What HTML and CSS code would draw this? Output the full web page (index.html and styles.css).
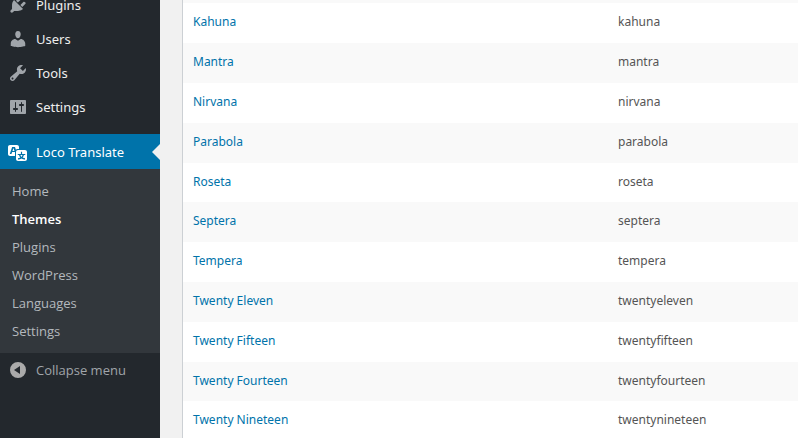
FILE: index.html
```html
<!DOCTYPE html>
<html lang="en">
<head>
    <meta charset="UTF-8">
    <title>Loco Translate - Themes</title>
    <link rel="stylesheet" href="styles.css">
</head>
<body>
    <nav class="sidebar">
        <ul class="menu">
            <li>
                <a class="menu-item" href="#">
                    <svg class="icon" viewBox="0 0 20 20"><path d="M13.11 4.36L9.87 7.6 8 5.73l3.24-3.24c.35-.34 1.05-.2 1.56.32.52.51.66 1.21.31 1.55zm-8 1.77l.91-1.12 9.01 9.01-1.19.84c-.71.71-2.63 1.16-3.82 1.16H6.14L4.9 17.26c-.59.59-1.54.59-2.12 0-.59-.58-.59-1.53 0-2.12l1.24-1.24v-3.88c0-1.13.4-3.19 1.09-3.89zm7.26 3.97l3.24-3.24c.34-.35 1.04-.21 1.55.31.52.51.66 1.21.31 1.55l-3.24 3.25z"/></svg>
                    Plugins
                </a>
            </li>
            <li>
                <a class="menu-item" href="#">
                    <svg class="icon" viewBox="0 0 20 20"><path d="M10 9.25c-2.27 0-2.73-3.44-2.73-3.44C7 4.02 7.82 2 9.97 2c2.16 0 2.98 2.02 2.71 3.81 0 0-.41 3.44-2.68 3.44zm0 2.57L12.72 10c2.39 0 4.52 2.33 4.52 4.53v2.49s-3.65 1.13-7.24 1.13c-3.65 0-7.24-1.13-7.24-1.13v-2.49c0-2.25 1.94-4.48 4.47-4.48z"/></svg>
                    Users
                </a>
            </li>
            <li>
                <a class="menu-item" href="#">
                    <svg class="icon" viewBox="0 0 20 20"><path d="M16.68 9.77c-1.34 1.34-3.3 1.67-4.95.99l-5.41 6.52c-.99.99-2.59.99-3.58 0s-.99-2.59 0-3.57l6.52-5.42c-.68-1.65-.35-3.61.99-4.95 1.28-1.28 3.12-1.62 4.72-1.06l-2.89 2.89 2.82 2.82 2.86-2.87c.53 1.58.18 3.39-1.08 4.65zM3.81 16.21c.4.39 1.04.39 1.43 0 .4-.4.4-1.04 0-1.43-.39-.4-1.03-.4-1.43 0-.39.39-.39 1.03 0 1.43z"/></svg>
                    Tools
                </a>
            </li>
            <li>
                <a class="menu-item" href="#">
                    <svg class="icon" viewBox="0 0 20 20"><path d="M18 16V4c0-.55-.45-1-1-1H3c-.55 0-1 .45-1 1v12c0 .55.45 1 1 1h14c.55 0 1-.45 1-1zM8 11h1c.55 0 1 .45 1 1s-.45 1-1 1H8v1.5c0 .28-.22.5-.5.5s-.5-.22-.5-.5V13H6c-.55 0-1-.45-1-1s.45-1 1-1h1V5.5c0-.28.22-.5.5-.5s.5.22.5.5V11zm5-2h-1c-.55 0-1-.45-1-1s.45-1 1-1h1V5.5c0-.28.22-.5.5-.5s.5.22.5.5V7h1c.55 0 1 .45 1 1s-.45 1-1 1h-1v5.5c0 .28-.22.5-.5.5s-.5-.22-.5-.5V9z"/></svg>
                    Settings
                </a>
            </li>
            <li class="separator"></li>
            <li>
                <a class="menu-item current" href="#">
                    <svg class="icon" viewBox="0 0 20 20"><path d="M11 7H9.49c-.63 0-1.25.3-1.59.7L7 5H4.13l-2.39 7h1.69l.74-2H7v4H2c-1.1 0-2-.9-2-2V5c0-1.1.9-2 2-2h7c1.1 0 2 .9 2 2v2zM6.51 9H4.49l1-2.93zM10 8h7c1.1 0 2 .9 2 2v7c0 1.1-.9 2-2 2h-7c-1.1 0-2-.9-2-2v-7c0-1.1.9-2 2-2zm7.25 5v-1.08h-3.17V9.75h-1.16v2.17H9.75V13h1.28c.11.85.56 1.85 1.28 2.62-.87.36-1.89.62-2.31.62-.01.02.22.97.2 1.46.84 0 2.21-.5 3.28-1.15 1.09.65 2.48 1.15 3.34 1.15-.02-.49.2-1.44.2-1.46-.43 0-1.49-.27-2.38-.63.7-.77 1.14-1.77 1.25-2.61h1.36zm-3.81 1.93c-.5-.46-.85-1.13-1.01-1.93h2.09c-.17.8-.51 1.47-1 1.93l-.04.03s-.03-.02-.04-.03z"/></svg>
                    Loco Translate
                </a>
                <ul class="submenu">
                    <li><a href="#">Home</a></li>
                    <li><a class="active" href="#">Themes</a></li>
                    <li><a href="#">Plugins</a></li>
                    <li><a href="#">WordPress</a></li>
                    <li><a href="#">Languages</a></li>
                    <li><a href="#">Settings</a></li>
                </ul>
            </li>
        </ul>
        <button type="button" class="collapse">
            <svg class="icon" viewBox="0 0 20 20"><path fill-rule="evenodd" d="M10 2a8 8 0 1 0 0 16 8 8 0 0 0 0-16zm2 4v8l-6-4z"/></svg>
            Collapse menu
        </button>
    </nav>

    <main class="content">
        <table class="themes">
            <colgroup>
                <col class="col-name">
                <col>
            </colgroup>
            <tbody>
                <tr><td><a href="#">Kahuna</a></td><td>kahuna</td></tr>
                <tr><td><a href="#">Mantra</a></td><td>mantra</td></tr>
                <tr><td><a href="#">Nirvana</a></td><td>nirvana</td></tr>
                <tr><td><a href="#">Parabola</a></td><td>parabola</td></tr>
                <tr><td><a href="#">Roseta</a></td><td>roseta</td></tr>
                <tr><td><a href="#">Septera</a></td><td>septera</td></tr>
                <tr><td><a href="#">Tempera</a></td><td>tempera</td></tr>
                <tr><td><a href="#">Twenty Eleven</a></td><td>twentyeleven</td></tr>
                <tr><td><a href="#">Twenty Fifteen</a></td><td>twentyfifteen</td></tr>
                <tr><td><a href="#">Twenty Fourteen</a></td><td>twentyfourteen</td></tr>
                <tr><td><a href="#">Twenty Nineteen</a></td><td>twentynineteen</td></tr>
            </tbody>
        </table>
    </main>
</body>
</html>
```
FILE: styles.css
```css
* {
    box-sizing: border-box;
}
body {
    display: flex;
    height: 100vh;
    margin: 0;
    overflow: hidden;
    background: #f1f1f1;
    color: #555;
    font-family: "Noto Sans", "Open Sans", sans-serif;
    font-size: 12px;
}
a {
    color: #0073aa;
    text-decoration: none;
}
ul {
    list-style: none;
    margin: 0;
    padding: 0;
}

/* sidebar */
.sidebar {
    flex: none;
    width: 160px;
    background: #23282d;
}
.menu {
    margin-top: -12px;
}
.menu-item,
.collapse {
    display: flex;
    align-items: center;
    gap: 8px;
    width: 100%;
    height: 34px;
    padding: 0 8px;
    color: #eee;
    font-size: 13px;
}
.icon {
    flex: none;
    width: 20px;
    height: 20px;
    fill: #a0a5aa;
}
.separator {
    height: 10px;
}
.current {
    position: relative;
    height: 35px;
    background: #0073aa;
    color: #fff;
}
.current .icon {
    fill: #fff;
}
.current::after {
    content: "";
    position: absolute;
    top: 50%;
    right: 0;
    margin-top: -8px;
    border: 8px solid transparent;
    border-left: 0;
    border-right-color: #f1f1f1;
}
.submenu {
    padding: 8px 0;
    background: #32373c;
}
.submenu a {
    display: block;
    padding: 0 12px;
    color: #b4b9be;
    font-family: "Open Sans", sans-serif;
    font-size: 13px;
    line-height: 28px;
}
.submenu .active {
    color: #fff;
    font-weight: 600;
}
.collapse {
    border: 0;
    background: none;
    color: #a0a5aa;
    font-family: "Open Sans", sans-serif;
    cursor: pointer;
}
.collapse .icon {
    fill: #aaa;
}

/* theme list */
.content {
    flex: 1;
    padding-left: 22px;
}
.themes {
    width: 100%;
    table-layout: fixed;
    border-collapse: separate;
    border-spacing: 0;
    padding-top: 3px;
    border-left: 1px solid #ccd0d4;
    background: #f9f9f9;
}
.col-name {
    width: 425px;
}
.themes td {
    height: 40px;
    padding: 8px 10px;
    line-height: 22px;
    vertical-align: top;
}
.themes tr:nth-child(5n) td {
    height: 39px;
}
.themes tr:nth-child(odd) {
    background: #fff;
}
```
